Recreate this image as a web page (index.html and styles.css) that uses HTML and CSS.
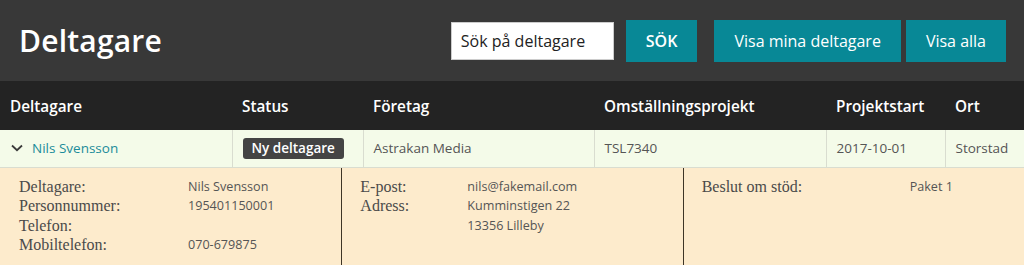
FILE: index.html
```html
<!DOCTYPE html>
<html>
<head>
    <meta charset="UTF-8">
    <link rel="stylesheet" href="styles.css">
</head>
<body>
    <div class="page-header">
        <h1 class="title">Deltagare</h1>
        <div class="search">
            <input type="text" class="search-input" value="Sök på deltagare">
            <button class="btn btn-search">SÖK</button>
            <button class="btn btn-mine">Visa mina deltagare</button>
            <button class="btn">Visa alla</button>
        </div>
    </div>

    <table class="participants">
        <colgroup>
            <col style="width: 232px">
            <col style="width: 131px">
            <col style="width: 231px">
            <col style="width: 232px">
            <col style="width: 119px">
            <col>
        </colgroup>
        <thead>
            <tr>
                <th>Deltagare</th>
                <th>Status</th>
                <th>Företag</th>
                <th>Omställningsprojekt</th>
                <th>Projektstart</th>
                <th>Ort</th>
            </tr>
        </thead>
        <tbody>
            <tr class="row">
                <td>
                    <a class="name-link" href="#">
                        <svg class="chevron" width="12" height="8" viewBox="0 0 12 8">
                            <path d="M1 1.5 L6 6.2 L11 1.5" fill="none" stroke="#3a3a3a" stroke-width="1.8"/>
                        </svg>
                        Nils Svensson
                    </a>
                </td>
                <td><span class="badge">Ny deltagare</span></td>
                <td>Astrakan Media</td>
                <td>TSL7340</td>
                <td>2017-10-01</td>
                <td>Storstad</td>
            </tr>
            <tr class="detail-row">
                <td colspan="6">
                    <div class="details">
                        <div class="detail-panel panel-person">
                            <span class="label">Deltagare:</span><span class="value">Nils Svensson</span>
                            <span class="label">Personnummer:</span><span class="value">195401150001</span>
                            <span class="label">Telefon:</span><span class="value"></span>
                            <span class="label">Mobiltelefon:</span><span class="value">070-679875</span>
                        </div>
                        <div class="detail-panel panel-contact">
                            <span class="label">E-post:</span><span class="value">nils@fakemail.com</span>
                            <span class="label">Adress:</span><span class="value">Kumminstigen 22<br>13356 Lilleby</span>
                        </div>
                        <div class="detail-panel panel-decision">
                            <span class="label">Beslut om stöd:</span><span class="value">Paket 1</span>
                        </div>
                    </div>
                </td>
            </tr>
        </tbody>
    </table>
</body>
</html>
```

FILE: styles.css
```css
* {
    box-sizing: border-box;
}

body {
    margin: 0;
    font-family: 'Open Sans', 'Liberation Sans', sans-serif;
    background: #fdebcc;
    color: #555;
}

.page-header {
    display: flex;
    justify-content: space-between;
    align-items: center;
    height: 81px;
    padding: 0 18px 0 19px;
    background: #383838;
}

.title {
    margin: 0;
    color: #fff;
    font-size: 30px;
    font-weight: 600;
    letter-spacing: 0.2px;
}

.search {
    display: flex;
    align-items: center;
}

.search-input {
    width: 163px;
    height: 38px;
    margin-right: 12px;
    padding: 0 9px;
    border: 1px solid #ccc;
    background: #fff;
    color: #222;
    font-family: inherit;
    font-size: 16px;
}

.btn {
    height: 42px;
    padding: 0 20px;
    border: none;
    background: #088896;
    color: #fff;
    font-family: inherit;
    font-size: 16px;
    cursor: pointer;
}

.btn-search {
    margin-right: 17px;
    font-weight: 600;
}

.btn-mine {
    margin-right: 5px;
}

.participants {
    width: 100%;
    border-collapse: collapse;
    table-layout: fixed;
}

.participants th {
    height: 49px;
    padding: 0 10px;
    background: #232323;
    color: #fff;
    font-size: 15.3px;
    font-weight: 600;
    text-align: left;
}

.row td {
    height: 37px;
    padding: 0 10px;
    background: #f4fbe9;
    border: 1px solid #d9ddd0;
    border-top: none;
    font-size: 13.5px;
    color: #555;
    white-space: nowrap;
}

.row td:first-child {
    border-left: none;
}

.row td:last-child {
    border-right: none;
}

.name-link {
    display: flex;
    align-items: center;
    gap: 9px;
    padding-left: 1px;
    color: #1b8c9a;
    text-decoration: none;
}

.badge {
    display: inline-block;
    padding: 1px 9px 2px;
    border-radius: 3px;
    background: #444;
    color: #fff;
    font-weight: 600;
    font-size: 13.5px;
}

.detail-row td {
    padding: 0;
}

.details {
    display: flex;
    min-height: 98px;
}

.detail-panel {
    flex: 1;
    display: grid;
    align-content: start;
    padding: 9px 18px 0 19px;
    line-height: 19.5px;
}

.detail-panel + .detail-panel {
    border-left: 1px solid #3e3526;
    padding-left: 18px;
}

.panel-person {
    grid-template-columns: 169px 1fr;
}

.panel-contact {
    grid-template-columns: 107px 1fr;
}

.panel-decision {
    grid-template-columns: 208px 1fr;
}

.label {
    font-family: 'Liberation Serif', serif;
    font-size: 16px;
    color: #4a4a4a;
}

.value {
    font-size: 12.6px;
    color: #555;
}
```
